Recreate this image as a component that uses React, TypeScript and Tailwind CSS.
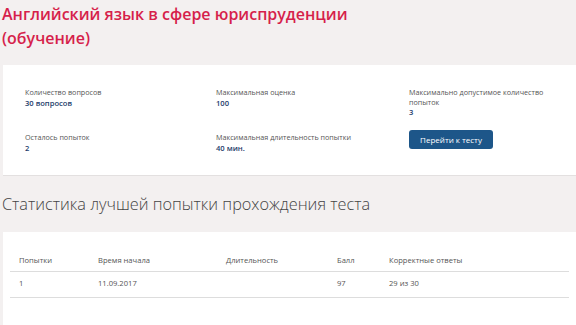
import React from "react";

const font = { fontFamily: '"Open Sans", "Liberation Sans", sans-serif' };

function Info({ label, value }: { label: string; value: string }) {
  return (
    <div className="flex flex-col">
      <div className="text-[7.2px] leading-[9.5px] text-[#555]">{label}</div>
      <div className="text-[7.6px] leading-[10px] font-semibold text-[#1e3d6b]">{value}</div>
    </div>
  );
}

export default function App() {
  const cols = "grid grid-cols-[79px_128px_111px_52px_1fr]";
  return (
    <div className="min-h-[325px] bg-[#f3f0f0] pl-[3px] overflow-hidden" style={font}>
      <h1 className="-ml-px pt-[2px] text-[16px] leading-[24px] font-semibold text-[#d61f4b] w-[380px]">
        Английский язык в сфере юриспруденции (обучение)
      </h1>
      <div className="mt-[15px] bg-white border-b border-[#e3e0e0] pl-[22px] pt-[23px] pb-[22px]">
        <div className="grid grid-cols-[191px_193px_140px] gap-y-[16px]">
          <Info label="Количество вопросов" value="30 вопросов" />
          <Info label="Максимальная оценка" value="100" />
          <Info label="Максимально допустимое количество попыток" value="3" />
          <Info label="Осталось попыток" value="2" />
          <Info label="Максимальная длительность попытки" value="40 мин." />
          <div className="flex">
            <button className="block -mt-[3px] w-[84px] h-[19px] rounded-[3px] bg-[#1d5689] text-white text-[8px] leading-[19px] text-center">
              Перейти к тесту
            </button>
          </div>
        </div>
      </div>
      <h2 className="-ml-px mt-[17px] text-[16.3px] leading-[22px] font-light text-[#444]">
        Статистика лучшей попытки прохождения теста
      </h2>
      <div className="mt-[17px] bg-white px-[7px] pt-[20px] pb-[40px]">
        <div className={`${cols} border-b border-[#ddd] h-[20px] items-center pl-[9px] text-[7.6px] text-[#555]`}>
          <div>Попытки</div>
          <div>Время начала</div>
          <div>Длительность</div>
          <div>Балл</div>
          <div>Корректные ответы</div>
        </div>
        <div className={`${cols} border-b border-[#ddd] h-[26px] items-center pl-[9px] text-[7.6px] text-[#555]`}>
          <div>1</div>
          <div>11.09.2017</div>
          <div></div>
          <div>97</div>
          <div>29 из 30</div>
        </div>
      </div>
    </div>
  );
}
